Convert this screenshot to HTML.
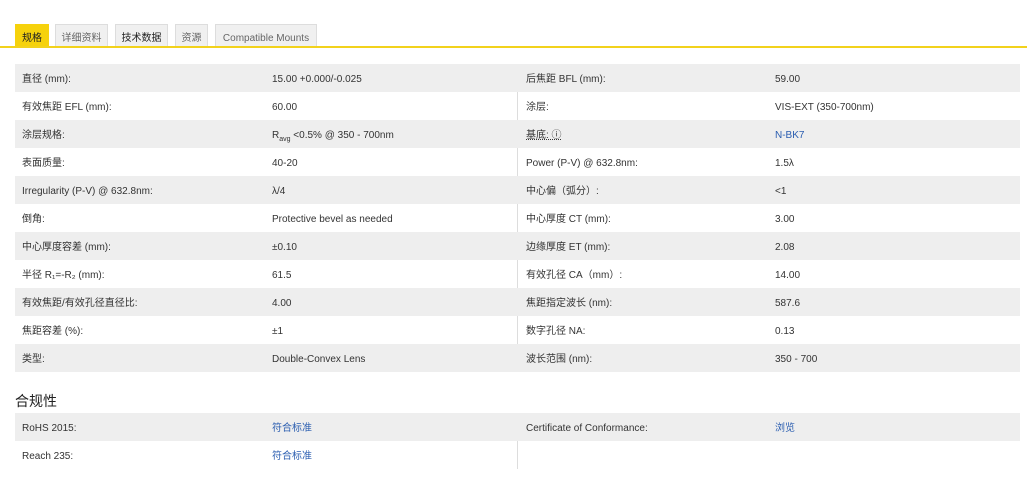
<!DOCTYPE html><html><head><meta charset="utf-8"><style>
body{margin:0;background:#fff;font-family:"Liberation Sans","Noto Sans CJK SC",sans-serif;font-size:10px;color:#333;width:1027px;height:497px;overflow:hidden;position:relative}
.tab{position:absolute;top:24px;height:23px;line-height:27px;background:#f0f0f0;border:1px solid #ddd;border-bottom:none;box-sizing:border-box;text-align:center;color:#666;font-size:10px}
.line{position:absolute;top:46px;left:0;width:1027px;height:2px;background:#f2d21c}
.row{position:absolute;left:15px;width:1005px;height:28px;line-height:31px}
.row.s{background:#eeeeee}
.row span{position:absolute;top:0}
.a{left:7px}.b{left:257px}.c{left:511px}.d{left:760px}
.vl{position:absolute;left:517px;width:1px;background:#ddd}
a{color:#2a5db0;text-decoration:none}
h3{position:absolute;left:15px;top:391px;margin:0;font-size:14px;font-weight:normal;color:#222}
</style></head><body>
<div class="tab" style="left:15px;width:34px;background:#f6d20c;color:#222;border-color:#f6d20c">规格</div>
<div class="tab" style="left:55px;width:53px">详细资料</div>
<div class="tab" style="left:115px;width:53px;color:#222">技术数据</div>
<div class="tab" style="left:175px;width:33px">资源</div>
<div class="tab" style="left:215px;width:102px">Compatible Mounts</div>
<div class="line"></div>
<div class="vl" style="top:64px;height:308px"></div>
<div class="row s" style="top:64px"><span class="a">直径 (mm):</span><span class="b">15.00 +0.000/-0.025</span><span class="c">后焦距 BFL (mm):</span><span class="d">59.00</span></div>
<div class="row" style="top:92px"><span class="a">有效焦距 EFL (mm):</span><span class="b">60.00</span><span class="c">涂层:</span><span class="d">VIS-EXT (350-700nm)</span></div>
<div class="row s" style="top:120px"><span class="a">涂层规格:</span><span class="b">R<sub style="font-size:7px">avg</sub> &lt;0.5% @ 350 - 700nm</span><span class="c" style="text-decoration:underline dotted">基底: ⓘ</span><span class="d"><a>N-BK7</a></span></div>
<div class="row" style="top:148px"><span class="a">表面质量:</span><span class="b">40-20</span><span class="c">Power (P-V) @ 632.8nm:</span><span class="d">1.5λ</span></div>
<div class="row s" style="top:176px"><span class="a">Irregularity (P-V) @ 632.8nm:</span><span class="b">λ/4</span><span class="c">中心偏（弧分）:</span><span class="d">&lt;1</span></div>
<div class="row" style="top:204px"><span class="a">倒角:</span><span class="b">Protective bevel as needed</span><span class="c">中心厚度 CT (mm):</span><span class="d">3.00</span></div>
<div class="row s" style="top:232px"><span class="a">中心厚度容差 (mm):</span><span class="b">±0.10</span><span class="c">边缘厚度 ET (mm):</span><span class="d">2.08</span></div>
<div class="row" style="top:260px"><span class="a">半径 R₁=-R₂ (mm):</span><span class="b">61.5</span><span class="c">有效孔径 CA（mm）:</span><span class="d">14.00</span></div>
<div class="row s" style="top:288px"><span class="a">有效焦距/有效孔径直径比:</span><span class="b">4.00</span><span class="c">焦距指定波长 (nm):</span><span class="d">587.6</span></div>
<div class="row" style="top:316px"><span class="a">焦距容差 (%):</span><span class="b">±1</span><span class="c">数字孔径 NA:</span><span class="d">0.13</span></div>
<div class="row s" style="top:344px"><span class="a">类型:</span><span class="b">Double-Convex Lens</span><span class="c">波长范围 (nm):</span><span class="d">350 - 700</span></div>
<h3>合规性</h3>
<div class="vl" style="top:413px;height:56px"></div>
<div class="row s" style="top:413px"><span class="a">RoHS 2015:</span><span class="b"><a>符合标准</a></span><span class="c">Certificate of Conformance:</span><span class="d"><a>浏览</a></span></div>
<div class="row" style="top:441px"><span class="a">Reach 235:</span><span class="b"><a>符合标准</a></span></div>
</body></html>
